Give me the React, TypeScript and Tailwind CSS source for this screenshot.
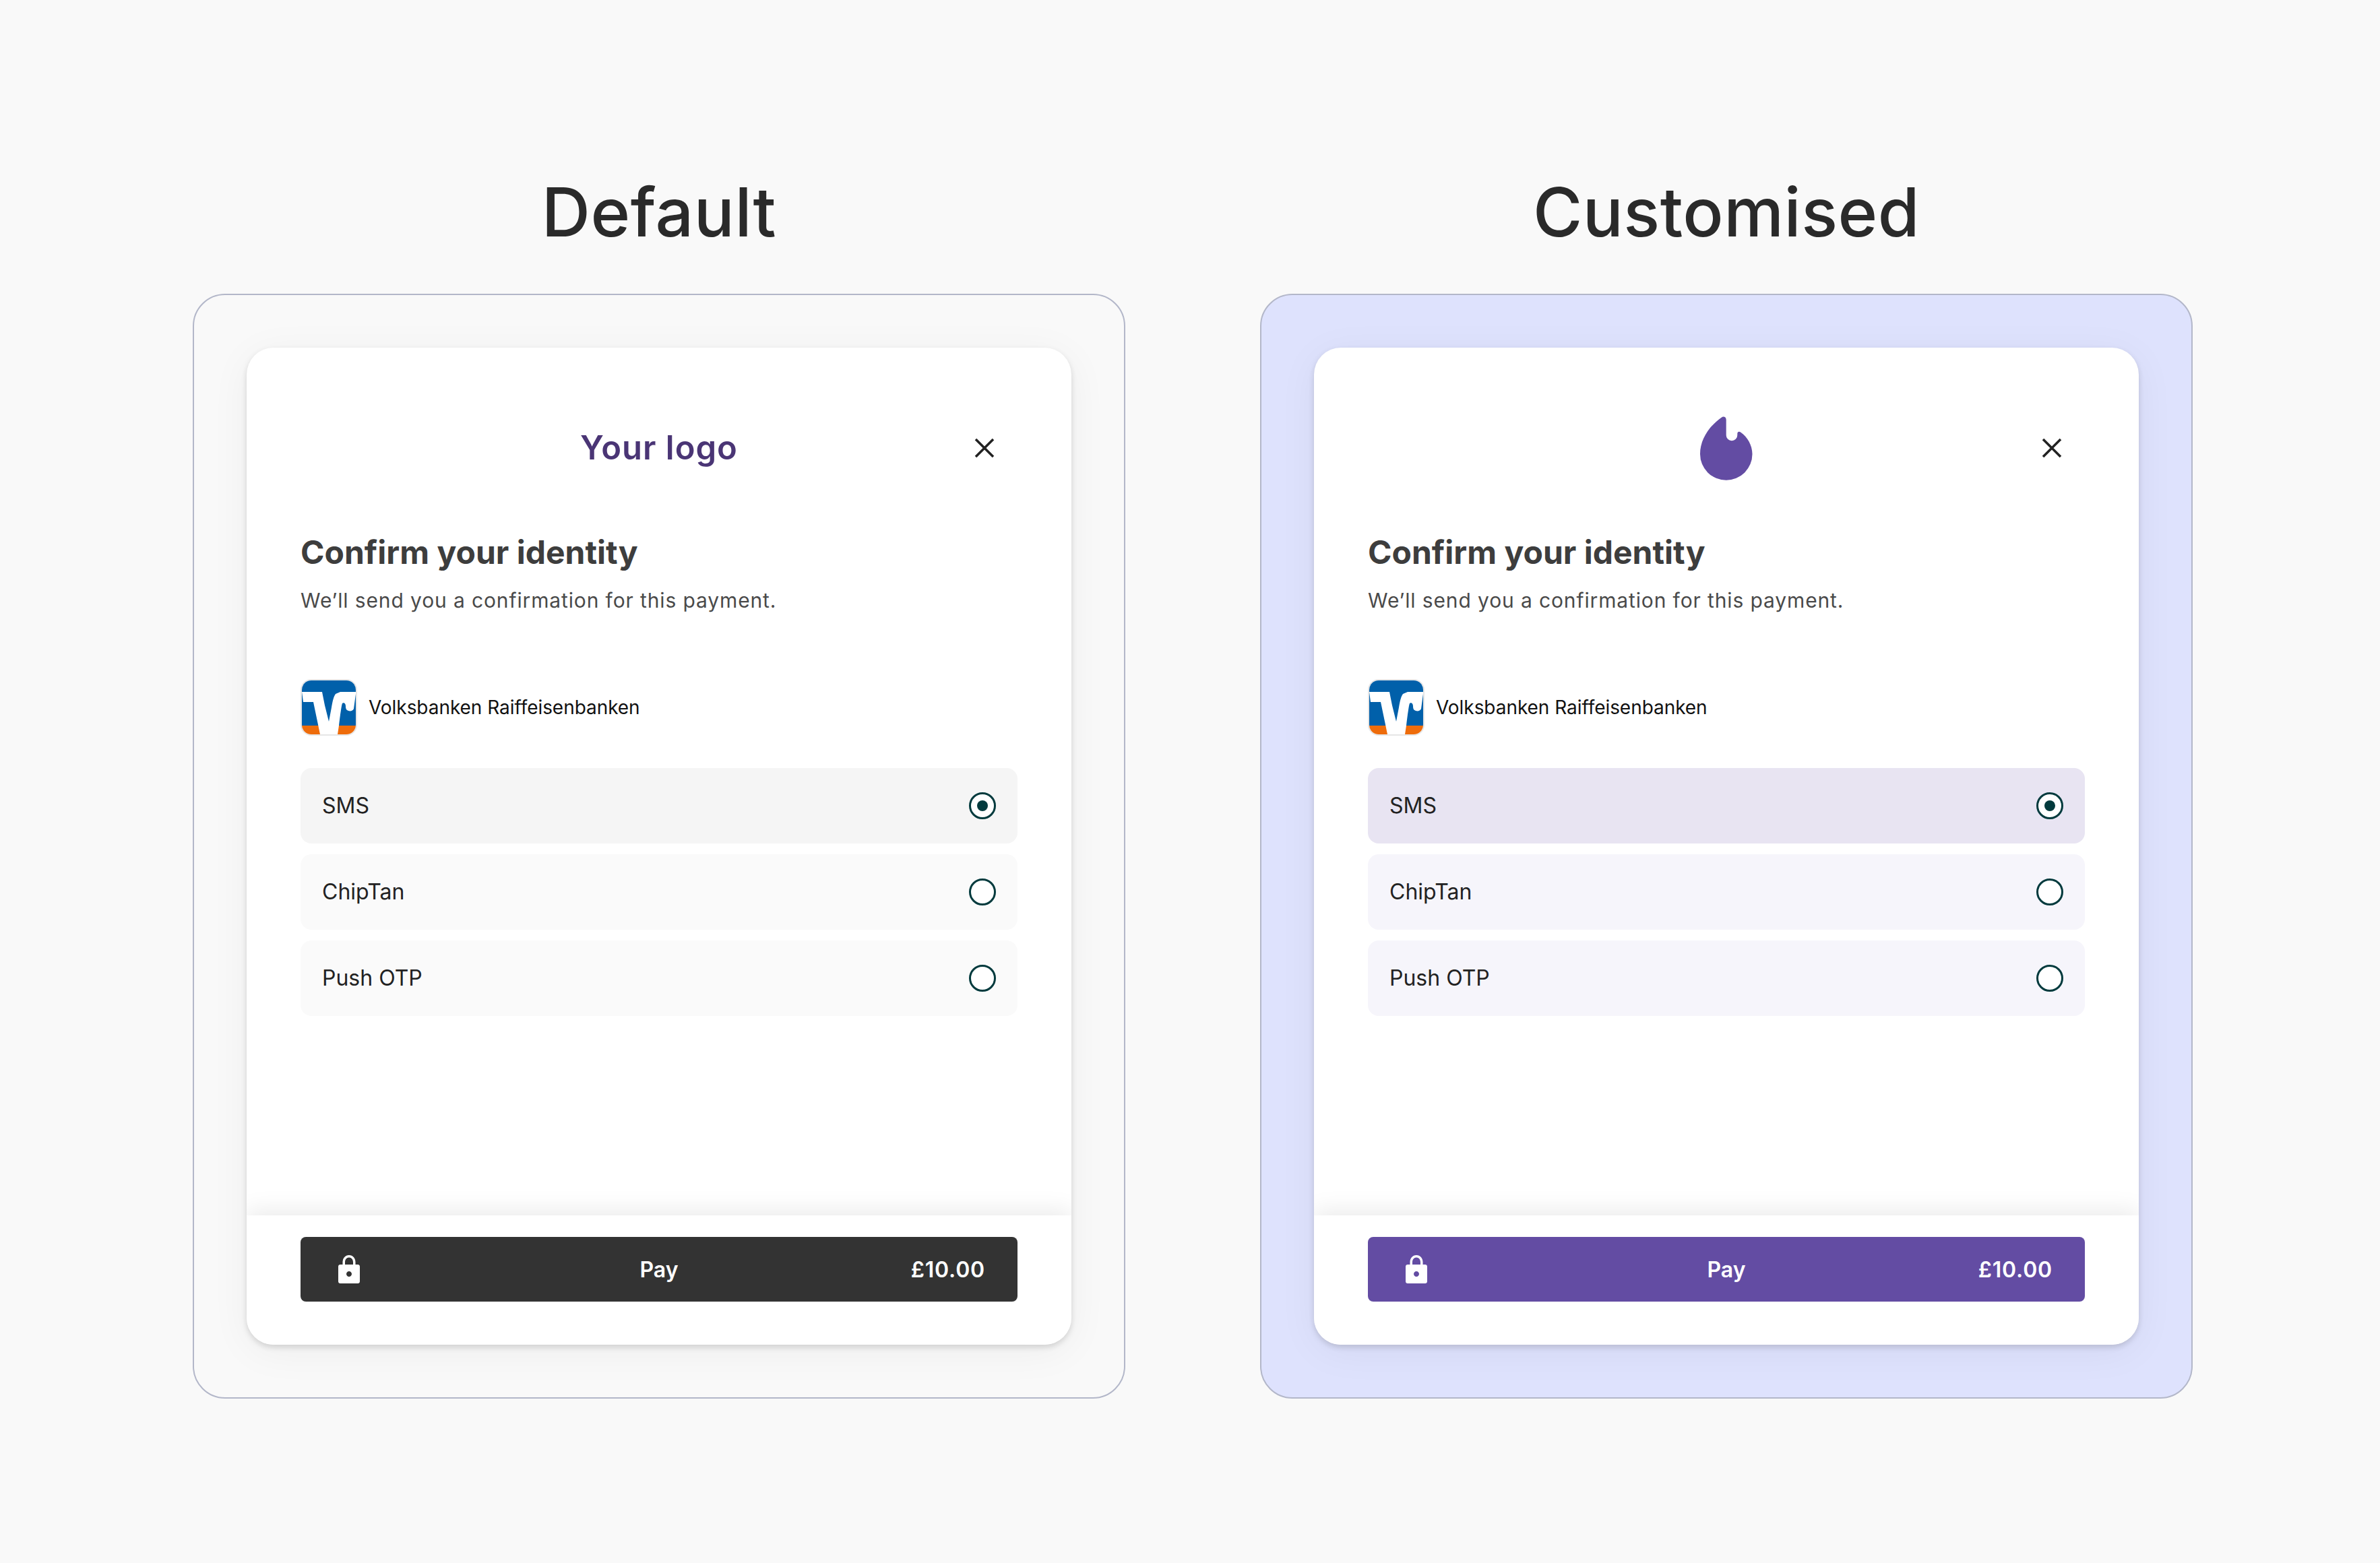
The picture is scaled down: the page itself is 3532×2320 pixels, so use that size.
import React from "react";

const inter = { fontFamily: "Inter, 'Liberation Sans', sans-serif" };

function BankLogo() {
  return (
    <div className="w-[84px] h-[84px] rounded-[16px] border-2 border-[#e6e6e6] overflow-hidden shrink-0">
      <svg viewBox="0 0 80 80" className="w-full h-full block">
        <rect width="80" height="67" fill="#0060aa" />
        <rect y="67" width="80" height="13" fill="#ee6c0b" />
        <path
          d="M0 17H30L34 37L40 61L44 40C45.5 31 47 24 50 20L57 17H80V20L77 42C76 45 72 46 69 45C66 44 65 42 65 38C65 34 62 32 60 34C59 36 57 50 55 67L53 80H27L17 32H2Z"
          fill="#fff"
        />
      </svg>
    </div>
  );
}

function Flame() {
  return (
    <svg viewBox="0 0 78 95" className="w-[78px] h-[95px] block">
      <path
        d="M32 1.5C34.5-.5 38.7.8 38.7 5V28A8.3 8.3 0 0 0 55.3 28V26C55.3 23 57.8 22 60 23.5C70 30 77.5 43 77.5 56A38.75 38.75 0 0 1 0 56C0 34 14 14 32 1.5Z"
        fill="#634ca3"
      />
    </svg>
  );
}

function CloseIcon() {
  return (
    <svg viewBox="0 0 30 30" className="w-[30px] h-[30px] block">
      <path d="M2 2L28 28M28 2L2 28" stroke="#222" strokeWidth="3.6" fill="none" />
    </svg>
  );
}

function LockIcon() {
  return (
    <svg viewBox="0 0 32 42" className="w-[32px] h-[42px] block">
      <path
        fillRule="evenodd"
        d="M3 14H6.500V10.500C6.500 4.500 10.500 0 16 0C21.500 0 25.500 4.500 25.500 10.500V14H29C30.700 14 32 15.300 32 17V39C32 40.700 30.700 42 29 42H3C1.300 42 0 40.700 0 39V17C0 15.300 1.300 14 3 14ZM10 14H22V10.500C22 6.500 19.500 3.500 16 3.500C12.500 3.500 10 6.500 10 10.500ZM16 24C13.800 24 12 25.800 12 28C12 30.200 13.800 32 16 32C18.200 32 20 30.200 20 28C20 25.800 18.200 24 16 24Z"
        fill="#fff"
      />
    </svg>
  );
}

function Radio({ checked }: { checked?: boolean }) {
  return (
    <span className="w-[40px] h-[40px] rounded-full border-[3px] border-[#023a3d] bg-white flex items-center justify-center shrink-0">
      {checked && <span className="w-[16px] h-[16px] rounded-full bg-[#023a3d]" />}
    </span>
  );
}

function OptionRow({ label, checked, className }: { label: string; checked?: boolean; className: string }) {
  return (
    <div className={`h-[112px] rounded-[16px] px-[32px] flex items-center justify-between ${className}`}>
      <span className="text-[32px] text-[#222]">{label}</span>
      <Radio checked={checked} />
    </div>
  );
}

function Checkout({ customised }: { customised?: boolean }) {
  const selectedBg = customised ? "bg-[#e8e4f2]" : "bg-[#f5f5f5]";
  const otherBg = customised ? "bg-[#f6f5fb]" : "bg-[#fafafa]";
  const btnBg = customised ? "bg-[#634ca3]" : "bg-[#333333]";

  return (
    <div
      className="w-[1224px] h-[1480px] bg-white rounded-[40px] overflow-hidden flex flex-col shadow-[0_4px_8px_rgba(0,0,0,0.14),0_10px_60px_rgba(0,0,0,0.05)]"
      style={inter}
    >
      <div className="flex-1 px-[80px]">
        <div className="h-[96px] mt-[101px] grid grid-cols-[1fr_auto_1fr] items-center">
          <span />
          {customised ? (
            <Flame />
          ) : (
            <span className="text-[49px] font-semibold text-[#4a3575] tracking-[1px]">Your logo</span>
          )}
          <span className="justify-self-end mr-[34px]">
            <CloseIcon />
          </span>
        </div>
        <h2 className="mt-[75px] text-[48px] leading-[64px] font-bold text-[#3d3d3d]">Confirm your identity</h2>
        <p className="mt-[16px] text-[30px] leading-[46px] tracking-[0.87px] text-[#4a4a4a]">We’ll send you a confirmation for this payment.</p>
        <div className="mt-[94px] flex items-center gap-[17px]">
          <BankLogo />
          <span className="text-[28px] tracking-[-0.05px] text-[#111]">Volksbanken Raiffeisenbanken</span>
        </div>
        <div className="mt-[48px] flex flex-col gap-[16px]">
          <OptionRow label="SMS" checked className={selectedBg} />
          <OptionRow label="ChipTan" className={otherBg} />
          <OptionRow label="Push OTP" className={otherBg} />
        </div>
      </div>
      <div className="h-[192px] px-[80px] pt-[32px] bg-white shadow-[0_-8px_32px_rgba(0,0,0,0.08)]">
        <div className={`h-[96px] rounded-[8px] px-[56px] grid grid-cols-[1fr_auto_1fr] items-center text-white text-[32px] font-semibold ${btnBg}`}>
          <LockIcon />
          <span className="pt-[2px]">Pay</span>
          <span className="pt-[2px] justify-self-end -mr-[8px] tracking-[0.8px]">£10.00</span>
        </div>
      </div>
    </div>
  );
}

function Column({ title, customised }: { title: string; customised?: boolean }) {
  return (
    <div className="w-[1384px] flex flex-col items-center">
      <h1
        className="h-[120px] mt-[255px] mb-[61px] text-[100px] leading-[120px] font-medium tracking-[0.5px] text-[#2a2a2a]"
        style={inter}
      >
        {title}
      </h1>
      <div
        className={`w-[1384px] h-[1640px] rounded-[48px] border-2 border-[#b3b7c9] flex items-center justify-center ${
          customised ? "bg-[#dee2fd]" : "bg-[#f9f9f9]"
        }`}
      >
        <Checkout customised={customised} />
      </div>
    </div>
  );
}

export default function App() {
  return (
    <div className="w-[3532px] h-[2320px] bg-[#f9f9f9] pl-[286px] flex gap-[200px] overflow-hidden">
      <Column title="Default" />
      <Column title="Customised" customised />
    </div>
  );
}
